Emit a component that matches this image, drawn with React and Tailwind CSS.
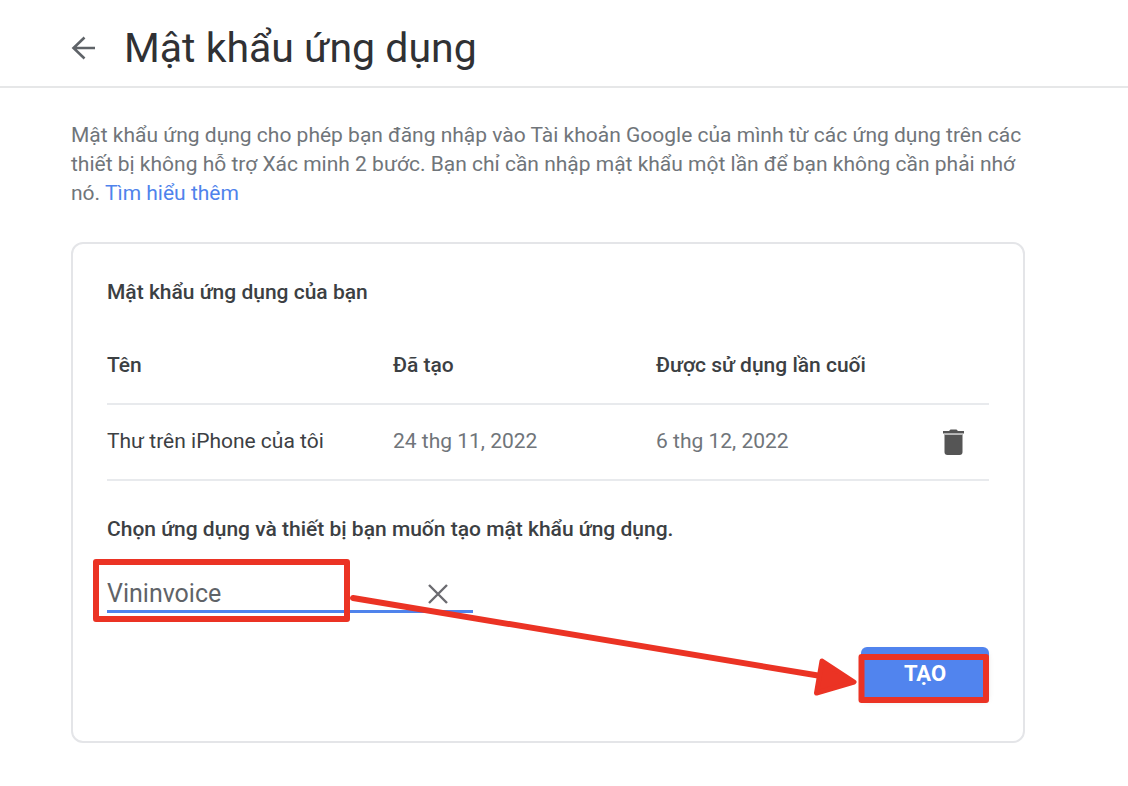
import { useState } from "react";

const passwords = [
  { name: "Thư trên iPhone của tôi", created: "24 thg 11, 2022", used: "6 thg 12, 2022" },
];

function BackIcon() {
  return (
    <svg viewBox="0 0 24 24" className="size-6" fill="none" stroke="#5f6368" strokeWidth="2.6" aria-hidden="true">
      <path d="M24 12H2.500M13.500 1.500 2.500 12l11 10.500" />
    </svg>
  );
}

function TrashIcon() {
  return (
    <svg viewBox="0 0 21 26" className="h-[26px] w-[21px]" aria-hidden="true">
      <path fill="#555" d="M0 2h6l1.500-1.500h6L15 2h6v2.500H0z" />
      <path fill="#bbb" d="M1 4.500h19V6H1z" />
      <path fill="#555" d="M1.500 6h18v17a3 3 0 0 1-3 3h-12a3 3 0 0 1-3-3z" />
    </svg>
  );
}

function Annotation() {
  return (
    <svg
      viewBox="0 0 900 150"
      className="pointer-events-none absolute -top-1 -left-4 h-[150px] w-[900px] max-w-none"
      fill="none"
      stroke="#eb3324"
      strokeLinejoin="round"
      aria-hidden="true"
    >
      <rect x="5" y="5" width="251" height="57" strokeWidth="6" />
      <rect x="770.500" y="100" width="124.500" height="43" strokeWidth="6" />
      <path d="M262 41 730 119" strokeWidth="6" strokeLinecap="round" />
      <path d="M731 104 763 125 725.500 136z" fill="#eb3324" strokeWidth="5" />
    </svg>
  );
}

export default function App() {
  const [appName, setAppName] = useState("Vininvoice");

  return (
    <div className="min-h-screen bg-white font-['Roboto','Liberation_Sans',sans-serif] text-[21px] text-[#3c4043]">
      <header className="flex h-[88px] items-center gap-[29px] border-b-2 border-[#e6e7e8] pt-2.5 pl-[71px]">
        <a href="#back" aria-label="Quay lại">
          <BackIcon />
        </a>
        <h1 className="text-[41px] leading-[48px] text-[#303134]">Mật khẩu ứng dụng</h1>
      </header>

      <main className="mr-[103px] ml-[71px] pt-[33px]">
        <p className="leading-[29px] text-[#70757a]">
          Mật khẩu ứng dụng cho phép bạn đăng nhập vào Tài khoản Google của mình từ các ứng dụng trên các
          thiết bị không hỗ trợ Xác minh 2 bước. Bạn chỉ cần nhập mật khẩu một lần để bạn không cần phải nhớ
          nó.{" "}
          <a href="#help" className="text-[#4f83ec]">Tìm hiểu thêm</a>
        </p>

        <section className="mt-[34px] rounded-xl border-2 border-[#e4e5e8] px-[34px] pt-8 pb-[42px]">
          <h2 className="font-medium leading-8">Mật khẩu ứng dụng của bạn</h2>

          <table className="mt-5 w-full table-fixed text-left">
            <colgroup>
              <col className="w-[286px]" />
              <col className="w-[263px]" />
              <col />
              <col className="w-[46px]" />
            </colgroup>
            <thead>
              <tr className="h-[76px] border-b-2 border-[#e8eaed]">
                <th className="font-medium">Tên</th>
                <th className="font-medium">Đã tạo</th>
                <th className="font-medium">Được sử dụng lần cuối</th>
                <td></td>
              </tr>
            </thead>
            <tbody>
              {passwords.map((row) => (
                <tr key={row.name} className="h-[76px] border-b-2 border-[#e8eaed]">
                  <td>{row.name}</td>
                  <td className="text-[#70757a]">{row.created}</td>
                  <td className="text-[#70757a]">{row.used}</td>
                  <td>
                    <button type="button" aria-label="Xóa" className="block">
                      <TrashIcon />
                    </button>
                  </td>
                </tr>
              ))}
            </tbody>
          </table>

          <form onSubmit={(event) => event.preventDefault()}>
            <label htmlFor="app-name" className="mt-8 block font-medium leading-8">
              Chọn ứng dụng và thiết bị bạn muốn tạo mật khẩu ứng dụng.
            </label>
            <div className="relative mt-4">
              <div className="flex h-[52px] w-[366px] items-center border-b-[3px] border-[#4f83ec] pt-4 pr-6">
                <input
                  id="app-name"
                  value={appName}
                  onChange={(event) => setAppName(event.target.value)}
                  className="min-w-0 flex-1 text-[25px] text-[#5f6368] outline-none"
                />
                <button type="button" aria-label="Xóa nội dung" onClick={() => setAppName("")}>
                  <svg viewBox="0 0 22 22" className="size-[22px]" fill="none" stroke="#6b6b70" strokeWidth="2.4" aria-hidden="true">
                    <path d="m2 2 18 18M20 2 2 20" />
                  </svg>
                </button>
              </div>
              <div className="mt-[34px] flex justify-end">
                <button
                  type="submit"
                  className="h-[52px] w-32 rounded-md bg-[#5184ee] text-[22px] font-bold text-white shadow-md"
                >
                  TẠO
                </button>
              </div>
              <Annotation />
            </div>
          </form>
        </section>
      </main>
    </div>
  );
}
